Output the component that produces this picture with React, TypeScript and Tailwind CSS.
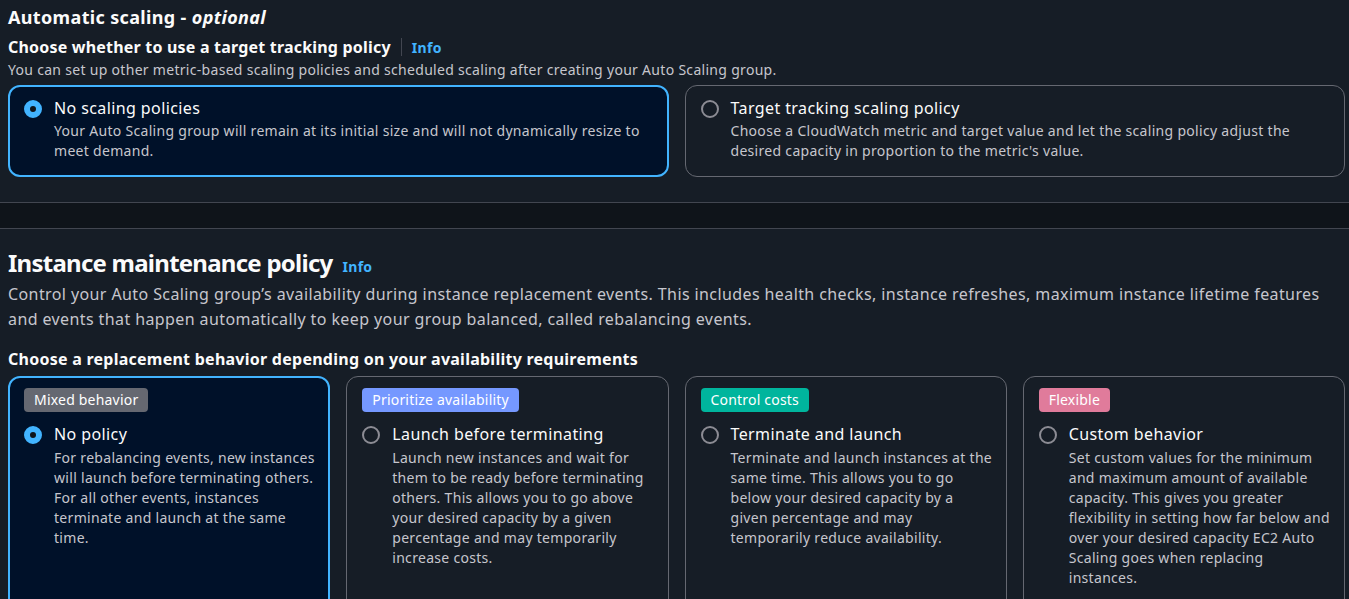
const scalingOptions = [
  {
    title: "No scaling policies",
    desc: "Your Auto Scaling group will remain at its initial size and will not dynamically resize to meet demand.",
    selected: true,
  },
  {
    title: "Target tracking scaling policy",
    desc: "Choose a CloudWatch metric and target value and let the scaling policy adjust the desired capacity in proportion to the metric's value.",
    selected: false,
  },
];

const behaviors = [
  {
    badge: "Mixed behavior",
    badgeClass: "bg-[#656871]",
    title: "No policy",
    desc: "For rebalancing events, new instances will launch before terminating others. For all other events, instances terminate and launch at the same time.",
    selected: true,
  },
  {
    badge: "Prioritize availability",
    badgeClass: "bg-[#7598ff]",
    title: "Launch before terminating",
    desc: "Launch new instances and wait for them to be ready before terminating others. This allows you to go above your desired capacity by a given percentage and may temporarily increase costs.",
    selected: false,
  },
  {
    badge: "Control costs",
    badgeClass: "bg-[#00b59d]",
    title: "Terminate and launch",
    desc: "Terminate and launch instances at the same time. This allows you to go below your desired capacity by a given percentage and may temporarily reduce availability.",
    selected: false,
  },
  {
    badge: "Flexible",
    badgeClass: "bg-[#e07b9b]",
    title: "Custom behavior",
    desc: "Set custom values for the minimum and maximum amount of available capacity. This gives you greater flexibility in setting how far below and over your desired capacity EC2 Auto Scaling goes when replacing instances.",
    selected: false,
  },
];

const Radio = ({ checked }: { checked: boolean }) =>
  checked ? (
    <span className="mt-[3px] h-[18px] w-[18px] shrink-0 rounded-full border-[6px] border-[#42b4ff] bg-[#0f141a]" />
  ) : (
    <span className="mt-[3px] h-[18px] w-[18px] shrink-0 rounded-full border-2 border-[#8c8c94]" />
  );

const App = () => {
  return (
    <div
      className="min-h-screen bg-[#161d26] text-[#c6c6cd]"
      style={{ fontFamily: '"Noto Sans", "Open Sans", Arial, sans-serif' }}
    >
      {/* Automatic scaling */}
      <section className="pl-2 pr-1 pt-[4px] pb-[25px]">
        <h2 className="text-[18px] font-bold leading-[26px] tracking-[0.35px] text-[#fbfbfb]">
          Automatic scaling - <i>optional</i>
        </h2>
        <div className="mt-[6px] flex items-center">
          <h3 className="text-[16px] font-bold leading-[22px] tracking-[0.2px] text-[#fbfbfb]">
            Choose whether to use a target tracking policy
          </h3>
          <span className="mx-[10px] h-[18px] w-px bg-[#424650]" />
          <span className="text-[14px] font-bold tracking-[0.3px] text-[#42b4ff]">Info</span>
        </div>
        <p className="mt-[1px] text-[14px] leading-[22px] tracking-[0.3px]">
          You can set up other metric-based scaling policies and scheduled scaling after creating your Auto Scaling group.
        </p>
        <div className="mt-[4px] grid grid-cols-2 gap-4">
          {scalingOptions.map((o) => (
            <div
              key={o.title}
              className={
                o.selected
                  ? "flex gap-[12px] rounded-xl border-2 border-[#42b4ff] bg-[#001129] px-[14px] pt-[10px] pb-[14px]"
                  : "flex gap-[12px] rounded-xl border border-[#656871] px-[15px] pt-[11px] pb-[15px]"
              }
            >
              <Radio checked={o.selected} />
              <div>
                <div className="text-[16px] leading-[22px] tracking-[0.4px] text-[#fbfbfb]">{o.title}</div>
                <div className="mt-[2px] text-[14px] leading-[20px] tracking-[0.3px]">{o.desc}</div>
              </div>
            </div>
          ))}
        </div>
      </section>

      <div className="h-[27px] border-y border-[#424650] bg-[#0f141a]" />

      {/* Instance maintenance policy */}
      <section className="pl-2 pr-1 pt-[19px]">
        <div className="flex items-baseline gap-[10px]">
          <h2 className="text-[24px] font-bold leading-[30px] tracking-[-0.75px] text-[#fbfbfb]">
            Instance maintenance policy
          </h2>
          <span className="text-[14px] font-bold tracking-[0.3px] text-[#42b4ff]">Info</span>
        </div>
        <p className="mt-[4px] text-[16px] leading-[25px] tracking-[0.4px]">
          Control your Auto Scaling group’s availability during instance replacement events. This includes health checks, instance refreshes, maximum instance lifetime features and events that happen automatically to keep your group balanced, called rebalancing events.
        </p>
        <h3 className="mt-[16px] text-[16px] font-bold leading-[22px] tracking-[0.25px] text-[#fbfbfb]">
          Choose a replacement behavior depending on your availability requirements
        </h3>
        <div className="mt-[6px] grid grid-cols-4 gap-4">
          {behaviors.map((b) => (
            <div
              key={b.title}
              className={
                b.selected
                  ? "min-h-[240px] rounded-xl border-2 border-[#42b4ff] bg-[#001129] pl-[14px] pr-[11px] pt-[9px] pb-[14px]"
                  : "min-h-[240px] rounded-xl border border-[#656871] pl-[15px] pr-[12px] pt-[10px] pb-[15px]"
              }
            >
              <span
                className={`inline-block rounded-[4px] px-[10px] text-[14px] leading-[24px] tracking-[0.2px] text-white ${b.badgeClass}`}
              >
                {b.badge}
              </span>
              <div className="mt-[11px] flex gap-[12px]">
                <Radio checked={b.selected} />
                <div>
                  <div className="text-[16px] leading-[22px] tracking-[0.4px] text-[#fbfbfb]">{b.title}</div>
                  <div className="mt-[3px] text-[14px] leading-[20px] tracking-[0.3px]">{b.desc}</div>
                </div>
              </div>
            </div>
          ))}
        </div>
      </section>
    </div>
  );
};

export default App;
